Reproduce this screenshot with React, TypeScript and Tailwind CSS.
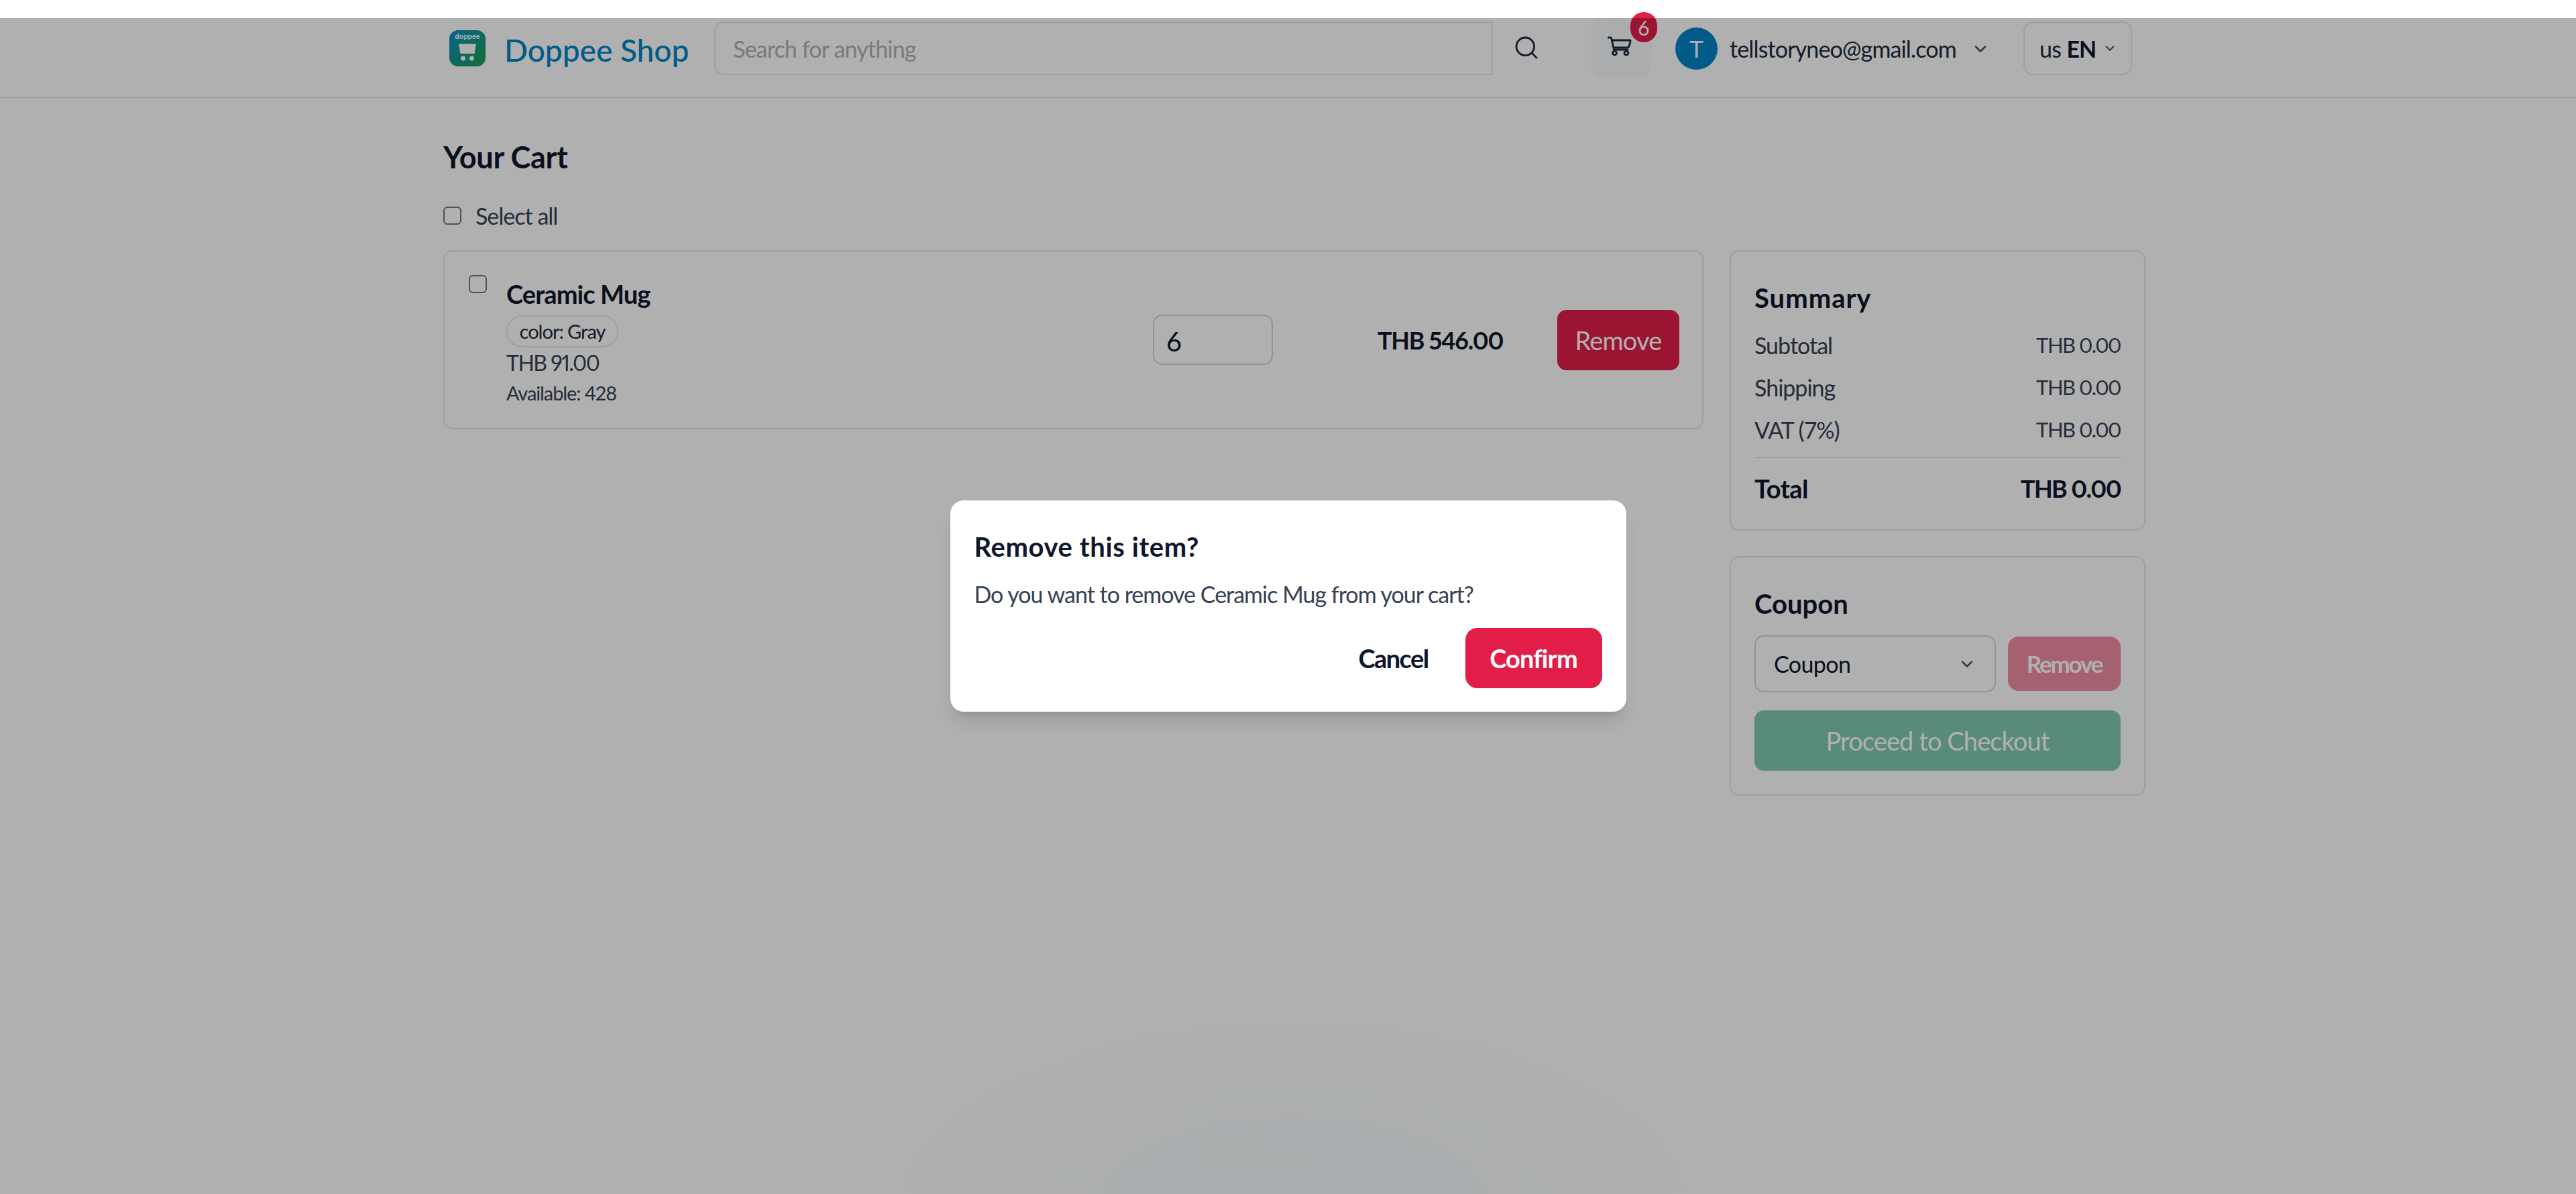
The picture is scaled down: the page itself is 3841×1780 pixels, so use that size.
import { ChevronDown, Search } from "lucide-react";

function Logo() {
  return (
    <svg width="54" height="54" viewBox="0 0 54 54" className="shrink-0">
      <defs>
        <linearGradient id="logo-fill" x1="0" y1="0" x2="1" y2="1">
          <stop offset="0" stopColor="#0c8fd0" />
          <stop offset="1" stopColor="#1aa34a" />
        </linearGradient>
      </defs>
      <rect width="54" height="54" rx="13" fill="url(#logo-fill)" />
      <text x="27" y="13" textAnchor="middle" fontSize="10.5" fontWeight="700" fill="#ffffff" fontFamily="Liberation Sans, sans-serif">
        doppee
      </text>
      <path d="M14 20.500 H 40 L 37.500 35 H 16.500 Z" fill="#ffffff" />
      <circle cx="20.500" cy="42" r="3.500" fill="#ffffff" />
      <circle cx="33.500" cy="42" r="3.500" fill="#ffffff" />
    </svg>
  );
}

// wider than lucide's cart, so drawn by hand
function CartIcon() {
  return (
    <svg width="36" height="30" viewBox="0 0 36 30" fill="none" stroke="currentColor" strokeWidth="2.8" strokeLinecap="round" strokeLinejoin="round" className="mb-[7px] mr-[4px]">
      <path d="M1 2 H4 Q5.500 2 6 4 L9.500 20 H30" />
      <path d="M7 6 H33 Q34.500 6 34 8 L32 15 Q31.500 17 30 17 H9" />
      <circle cx="10.500" cy="25" r="3" />
      <circle cx="28" cy="25" r="3" />
    </svg>
  );
}

function Header() {
  return (
    <header className="flex h-[119px] items-start border-b-[2px] border-gray-200 pl-[670px] pt-[5px]">
      <div className="mt-[13px]">
        <Logo />
      </div>
      <div className="ml-[28px] mt-[15px] w-[276px] whitespace-nowrap text-[46px] leading-[56px] font-medium text-[#0284c7]">Doppee Shop</div>
      <input
        placeholder="Search for anything"
        className="ml-[37px] h-[80px] w-[1161px] rounded-l-[14px] border-[2px] border-gray-200 bg-white pl-[26px] text-[34px] tracking-[-0.85px] text-gray-900 placeholder:text-[#adb1b9]"
      />
      <div className="ml-[30px] mt-[19px] text-slate-800">
        <Search size={40} strokeWidth={1.7} />
      </div>
      <div className="relative ml-[76px] -mt-[5px] flex h-[90px] w-[90px] items-center justify-center rounded-[20px] bg-slate-50 text-slate-800">
        <CartIcon />
        <span className="absolute left-[59px] top-[-9px] flex h-[45px] w-[40px] items-center justify-center rounded-full bg-[#e11d48] text-[30px] leading-none text-white">
          6
        </span>
      </div>
      <div className="ml-[36px] mt-[9px] flex h-[63px] w-[63px] items-center justify-center rounded-full bg-[#0284c7] text-[35px] text-white">T</div>
      <div className="ml-[18px] mt-[17px] w-[338px] whitespace-nowrap text-[34px] leading-[48px] tracking-[-0.86px] text-slate-800">tellstoryneo@gmail.com</div>
      <div className="ml-[22px] mt-[27px] text-slate-600">
        <ChevronDown size={28} strokeWidth={2.2} />
      </div>
      <button className="ml-[50px] flex h-[80px] w-[162px] items-center rounded-[14px] border-[2px] border-gray-200 pl-[22px] text-[34px] tracking-[-0.6px] text-slate-800">
        us
        <span className="ml-[8px] font-bold tracking-[-1px] text-slate-900">EN</span>
        <ChevronDown size={22} strokeWidth={2.2} className="ml-[10px] text-slate-600" />
      </button>
    </header>
  );
}

function CartCard() {
  return (
    <section className="flex h-[267px] w-[1879px] rounded-[14px] border-[2px] border-gray-200 pl-[36px]">
      <input type="checkbox" readOnly className="mt-[35px] h-[27px] w-[27px] appearance-none rounded-[6px] border-[2px] border-[#767676] bg-white" />
      <div className="ml-[29px] w-[964px] pt-[37px]">
        <div className="text-[38px] leading-[52px] font-bold tracking-[-0.9px] text-slate-900">Ceramic Mug</div>
        <div className="mt-[6px] flex h-[48px] w-[167px] items-center justify-center rounded-full border-[2px] border-gray-200 text-[29px] tracking-[-1px] text-slate-800">color: Gray</div>
        <div className="text-[32px] leading-[46px] tracking-[-1.5px] text-gray-700 proportional-nums">THB 91.00</div>
        <div className="mt-[3px] text-[29px] leading-[38px] tracking-[-1.1px] text-gray-700">Available: 428</div>
      </div>
      <div className="mt-[94px] flex h-[75px] w-[179px] items-center rounded-[14px] border-[2px] border-gray-300 pl-[18px] pt-[4px] text-[40px] text-slate-900">6</div>
      <div className="ml-[156px] mt-[108px] w-[186px] whitespace-nowrap text-[36px] leading-[48px] font-bold tracking-[-1.3px] text-slate-900 proportional-nums">THB 546.00</div>
      <button className="ml-[82px] mt-[87px] flex h-[90px] w-[182px] items-center justify-center rounded-[14px] bg-[#e11d48] text-[38px] tracking-[-0.8px] text-white">Remove</button>
    </section>
  );
}

function SummaryRow({ label, value }: { label: string; value: string }) {
  return (
    <div className="flex h-[63px] items-center justify-between text-gray-700">
      <span className="text-[34px] tracking-[-1px]">{label}</span>
      <span className="text-[31px] tracking-[-1.5px] proportional-nums">{value}</span>
    </div>
  );
}

function Sidebar() {
  return (
    <aside className="ml-[39px] w-[620px]">
      <section className="h-[418px] rounded-[14px] border-[2px] border-gray-200 px-[35px] pt-[43px]">
        <h2 className="text-[40px] leading-[52px] font-bold tracking-[1px] text-slate-900">Summary</h2>
        <div className="mt-[13px]">
          <SummaryRow label="Subtotal" value="THB 0.00" />
          <SummaryRow label="Shipping" value="THB 0.00" />
          <SummaryRow label="VAT (7%)" value="THB 0.00" />
        </div>
        <div className="mt-[9px] flex h-[75px] items-end justify-between border-t-[2px] border-gray-200 leading-[56px] font-bold text-slate-900">
          <span className="text-[38px] tracking-[-0.5px]">Total</span>
          <span className="text-[36px] tracking-[-1.6px] proportional-nums">THB 0.00</span>
        </div>
      </section>
      <section className="mt-[38px] h-[357px] rounded-[14px] border-[2px] border-gray-200 px-[35px] pt-[43px]">
        <h2 className="text-[40px] leading-[52px] font-bold text-slate-900">Coupon</h2>
        <div className="mt-[21px] flex items-center">
          <div className="flex h-[85px] w-[360px] items-center justify-between rounded-[14px] border-[2px] border-gray-300 px-[27px] text-[34px] tracking-[-0.6px] text-slate-900">
            Coupon
            <ChevronDown size={28} strokeWidth={2.2} className="text-gray-600" />
          </div>
          <button className="ml-[18px] flex h-[81px] w-[168px] items-center justify-center rounded-[16px] bg-[#e11d48] text-[35px] font-bold tracking-[-2.2px] text-white opacity-50">Remove</button>
        </div>
        <button className="mt-[27px] flex h-[90px] w-full items-center justify-center rounded-[14px] bg-[#059669] text-[38px] tracking-[-0.9px] text-white opacity-50">Proceed to Checkout</button>
      </section>
    </aside>
  );
}

function ConfirmDialog() {
  return (
    <div className="absolute inset-x-0 bottom-0 top-[27px] flex items-center justify-center bg-black/[0.31]">
      <div className="h-[315px] w-[1008px] rounded-[20px] bg-white px-[36px] pt-[41px] shadow-xl">
        <h3 className="text-[40px] leading-[56px] font-bold tracking-[0.6px] text-slate-900">Remove this item?</h3>
        <p className="mt-[20px] text-[34px] leading-[46px] tracking-[-1px] text-gray-700">Do you want to remove Ceramic Mug from your cart?</p>
        <div className="mt-[27px] flex items-center justify-end">
          <button className="text-[38px] font-bold tracking-[-1.6px] text-slate-900">Cancel</button>
          <button className="ml-[55px] flex h-[90px] w-[204px] items-center justify-center rounded-[18px] bg-[#e11d48] text-[38px] font-bold tracking-[-0.9px] text-white">Confirm</button>
        </div>
      </div>
    </div>
  );
}

export default function App() {
  return (
    <div className="relative min-h-[1780px] overflow-hidden bg-white bg-[radial-gradient(ellipse_620px_290px_at_1930px_1800px,#f3fbfe,#ffffff)] pt-[27px] font-['Lato',sans-serif]">
      <Header />
      <main className="pl-[661px] pt-[58px]">
        <h1 className="text-[45px] leading-[60px] font-bold tracking-[-0.3px] text-slate-900">Your Cart</h1>
        <label className="mt-[34px] flex h-[46px] items-center">
          <input type="checkbox" readOnly className="h-[27px] w-[27px] appearance-none rounded-[6px] border-[2px] border-[#767676] bg-white" />
          <span className="ml-[21px] text-[34px] tracking-[-1px] text-gray-700">Select all</span>
        </label>
        <div className="mt-[29px] flex items-start">
          <CartCard />
          <Sidebar />
        </div>
      </main>
      <ConfirmDialog />
    </div>
  );
}
